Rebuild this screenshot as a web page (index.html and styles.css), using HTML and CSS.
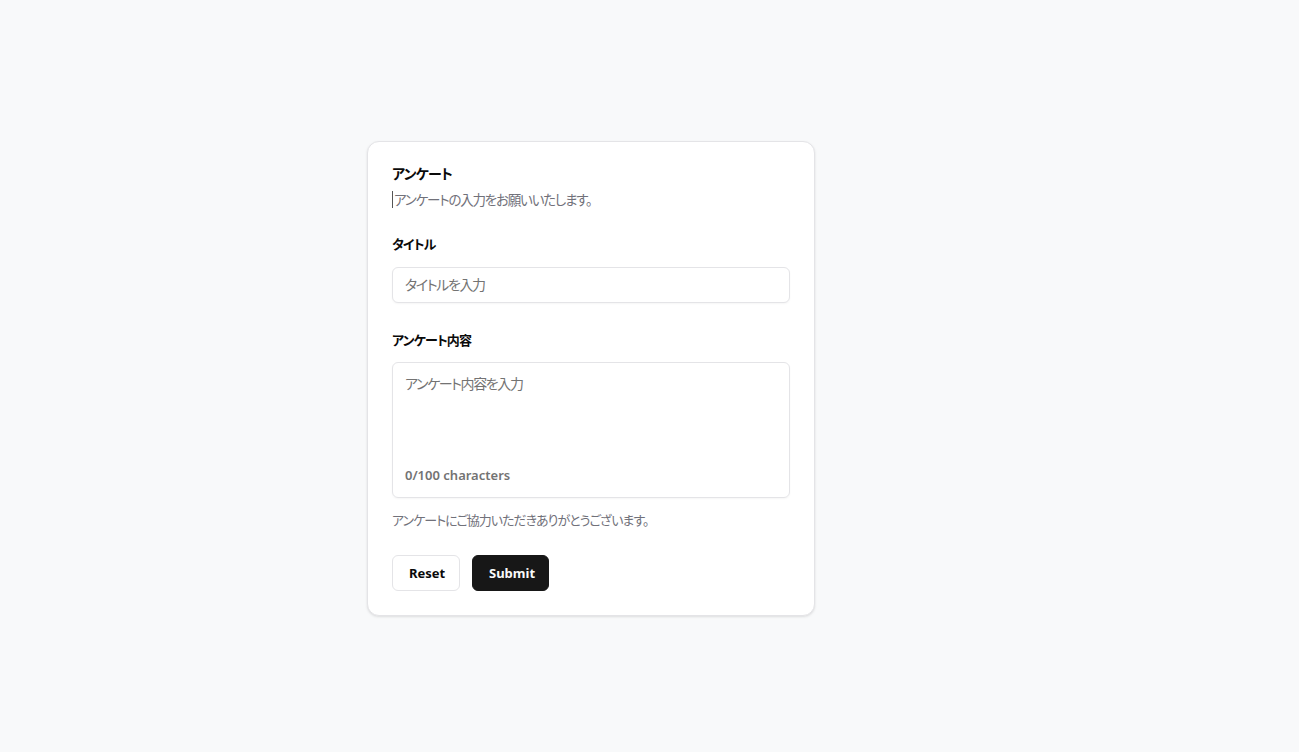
FILE: index.html
```html
<!DOCTYPE html>
<html lang="ja">
<head>
<meta charset="utf-8">
<title>アンケート</title>
<link rel="stylesheet" href="styles.css">
</head>
<body>
<main class="page">
  <form class="card">
    <h1 class="card-title">アンケート</h1>
    <p class="card-desc"><span class="caret"></span>アンケートの入力をお願いいたします。</p>

    <label class="label label-first" for="title">タイトル</label>
    <input class="input" id="title" type="text" placeholder="タイトルを入力">

    <label class="label label-second" for="content">アンケート内容</label>
    <div class="textarea-box">
      <textarea class="textarea" id="content" placeholder="アンケート内容を入力"></textarea>
      <div class="counter">0/100 characters</div>
    </div>

    <p class="thanks">アンケートにご協力いただきありがとうございます。</p>

    <div class="actions">
      <button type="reset" class="btn btn-outline">Reset</button>
      <button type="submit" class="btn btn-primary">Submit</button>
    </div>
  </form>
</main>
</body>
</html>
```
FILE: styles.css
```css
* { box-sizing: border-box; }
html, body { margin: 0; padding: 0; }
body {
  background: #f8f9fa;
  font-family: "Noto Sans", "Noto Sans CJK JP", sans-serif;
  font-feature-settings: "palt";
  color: #0a0a0a;
}
.page {
  min-height: 752px;
  display: flex;
  align-items: center;
  padding-left: 367px;
  padding-top: 4px;
}
.card {
  width: 448px;
  background: #fff;
  border: 1px solid #e4e4e7;
  border-radius: 12px;
  box-shadow: 0 1px 3px rgba(0,0,0,0.08), 0 1px 2px rgba(0,0,0,0.04);
  padding: 22px 24px 24px;
  display: flex;
  flex-direction: column;
}
.card-title {
  margin: 0;
  font-size: 14px;
  line-height: 20px;
  font-weight: 700;
  letter-spacing: -0.8px;
}
.card-desc {
  margin: 6px 0 0;
  font-size: 13.5px;
  line-height: 20px;
  color: #71717a;
  letter-spacing: -1.2px;
  display: flex;
  align-items: center;
}
.caret {
  display: inline-block;
  width: 1px;
  height: 17px;
  background: #555;
  margin-right: 1px;
}
.label {
  font-size: 13px;
  line-height: 20px;
  font-weight: 700;
  letter-spacing: -0.9px;
}
.label-first { margin-top: 24px; }
.label-second { margin-top: 27px; }
.input {
  margin-top: 13px;
  height: 36px;
  width: 100%;
  border: 1px solid #e4e4e7;
  border-radius: 6px;
  padding: 0 12px;
  font-family: inherit;
  font-feature-settings: "palt";
  font-size: 14px;
  letter-spacing: -1.4px;
  color: #0a0a0a;
  background: #fff;
  outline: none;
  box-shadow: 0 1px 2px rgba(0,0,0,0.04);
}
.input::placeholder, .textarea::placeholder { color: #737373; }
.textarea-box {
  margin-top: 12px;
  height: 136px;
  border: 1px solid #e4e4e7;
  border-radius: 6px;
  padding: 11px 12px 12px;
  display: flex;
  flex-direction: column;
  box-shadow: 0 1px 2px rgba(0,0,0,0.04);
}
.textarea {
  flex: 1;
  border: none;
  outline: none;
  resize: none;
  padding: 0;
  font-family: inherit;
  font-feature-settings: "palt";
  font-size: 14px;
  letter-spacing: -1.4px;
  line-height: 20px;
  color: #0a0a0a;
}
.counter {
  font-size: 13px;
  line-height: 20px;
  font-weight: 600;
  color: #737373;
}
.thanks {
  margin: 12px 0 0;
  font-size: 13px;
  line-height: 20px;
  color: #71717a;
  letter-spacing: -1px;
}
.actions {
  margin-top: 25px;
  display: flex;
  gap: 12px;
}
.btn {
  height: 36px;
  border-radius: 6px;
  font-family: inherit;
  font-size: 13px;
  font-weight: 700;
  padding: 0 16px;
  cursor: pointer;
}
.btn-outline {
  background: #fff;
  border: 1px solid #e4e4e7;
  color: #0a0a0a;
  width: 68px;
}
.btn-primary {
  background: #171717;
  border: 1px solid #171717;
  color: #fafafa;
  width: 77px;
}
```
